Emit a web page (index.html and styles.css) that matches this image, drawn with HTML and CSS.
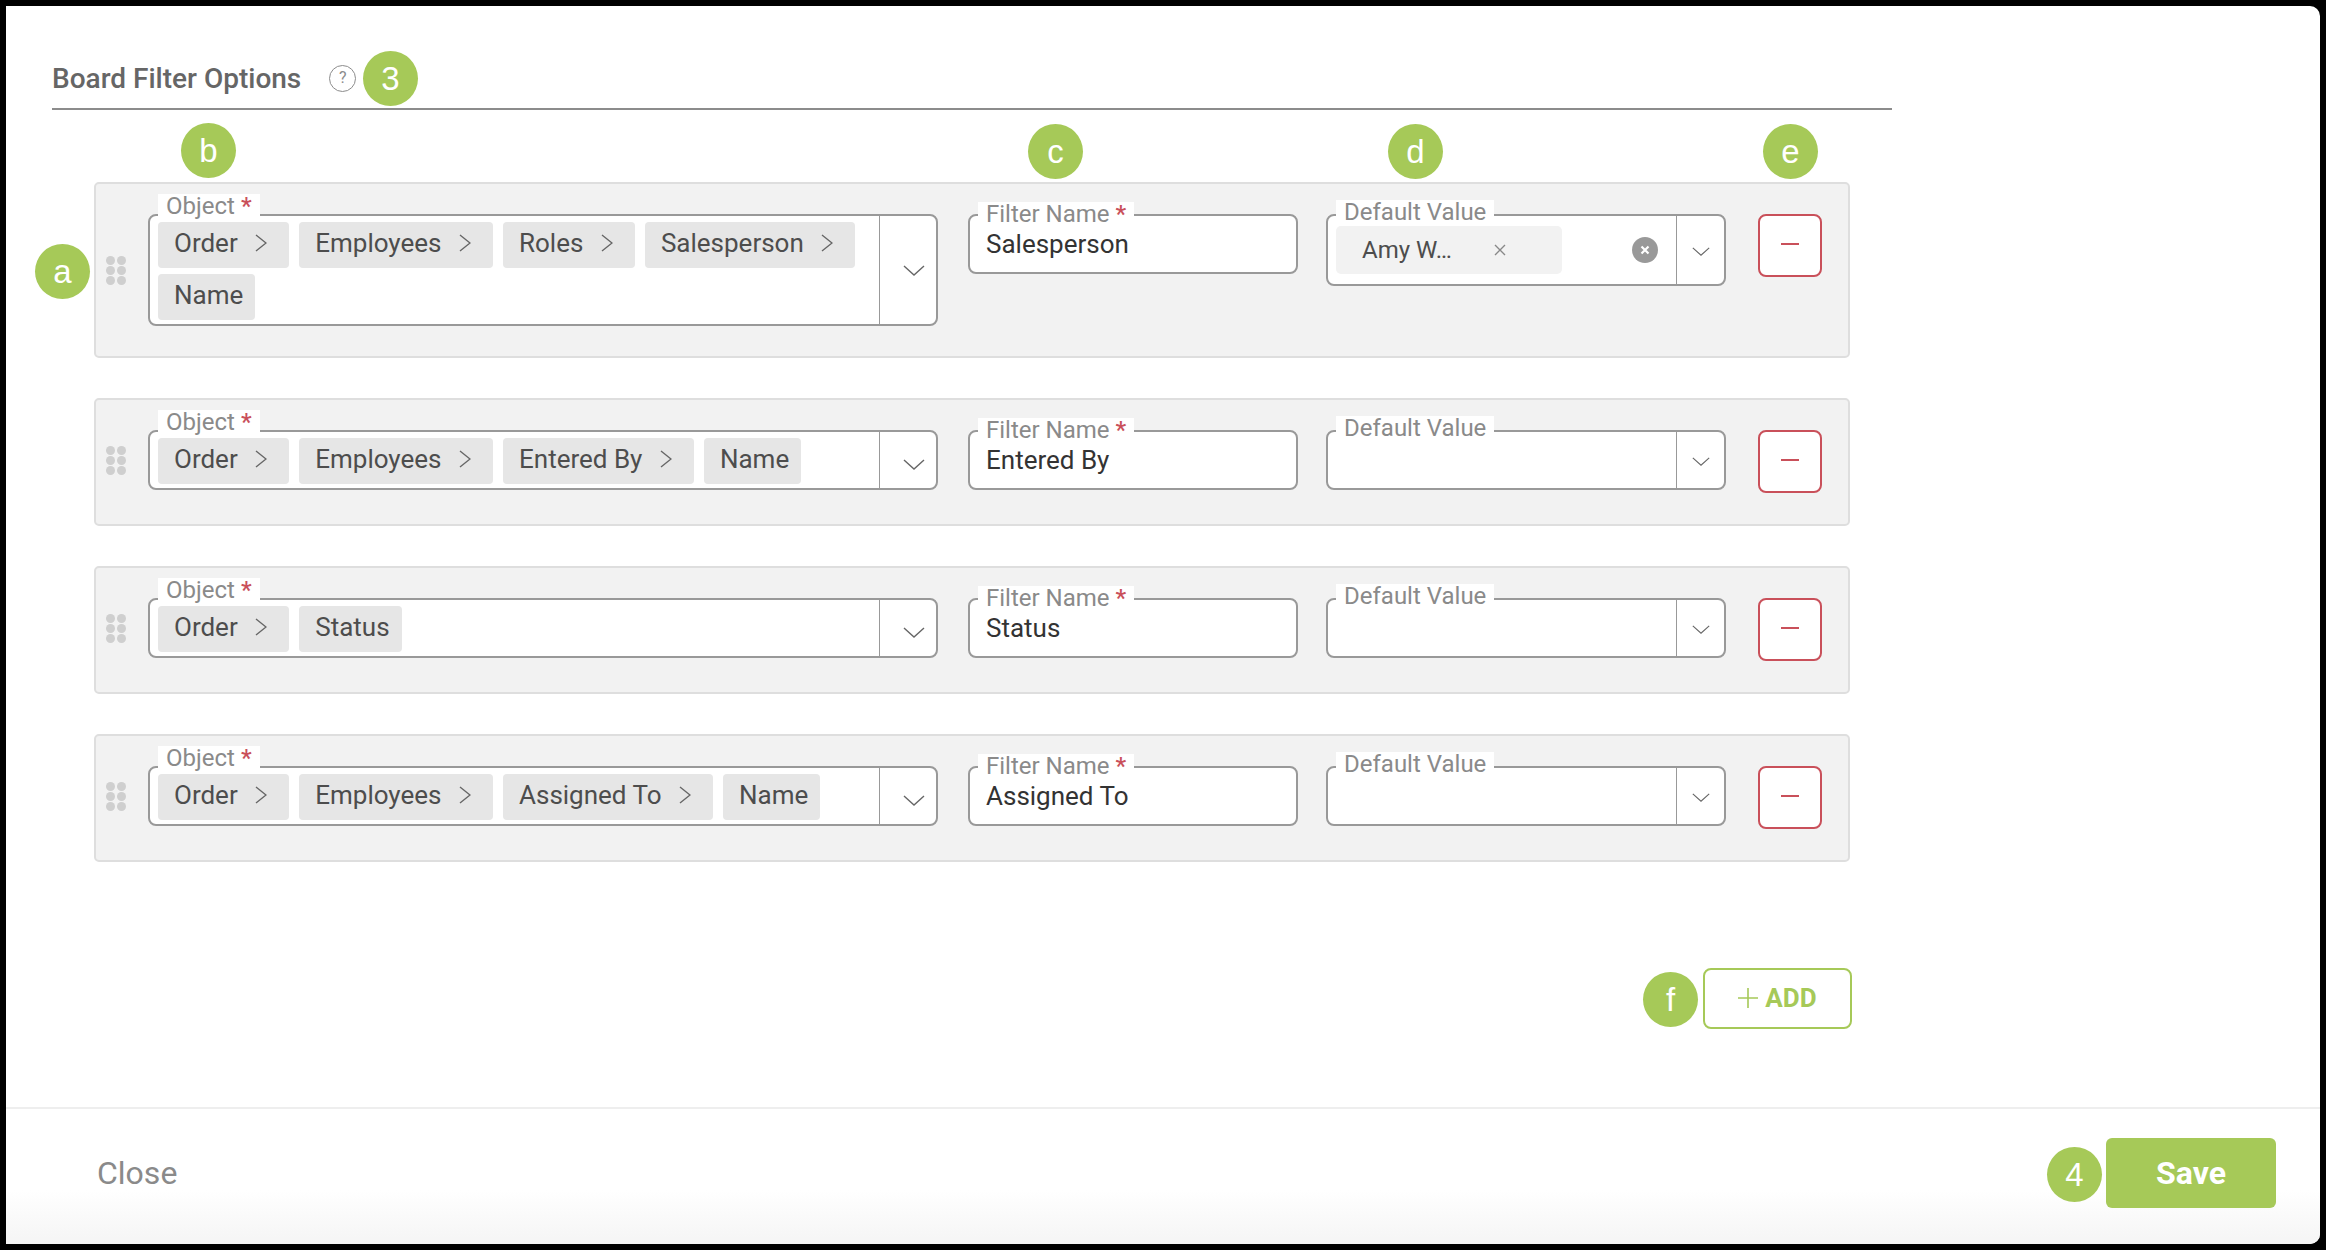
FILE: index.html
```html
<!DOCTYPE html>
<html lang="en">
<head>
<meta charset="utf-8">
<title>Board Filter Options</title>
<link rel="stylesheet" href="styles.css">
</head>
<body>
<svg class="defs" width="0" height="0" aria-hidden="true">
  <symbol id="crumb" viewBox="0 0 12 18"><path d="M1 1l10 8-10 8" fill="none" stroke="#666" stroke-width="1.4"/></symbol>
  <symbol id="caret" viewBox="0 0 22 11"><path d="M1 1l10 9 10-9" fill="none" stroke="#666" stroke-width="1.4"/></symbol>
</svg>
<div class="modal">
  <header class="head">
    <h1 class="title">Board Filter Options</h1>
    <span class="help">?</span>
  </header>

  <main class="rows">
    <section class="row row-tall">
      <div class="object-group">
        <div class="grip"><i></i><i></i><i></i><i></i><i></i><i></i></div>
        <div class="field object">
          <label class="label label-object">Object<b>*</b></label>
          <div class="chips">
            <span class="chip">Order<svg class="crumb"><use href="#crumb"/></svg></span>
            <span class="chip">Employees<svg class="crumb"><use href="#crumb"/></svg></span>
            <span class="chip">Roles<svg class="crumb"><use href="#crumb"/></svg></span>
            <span class="chip">Salesperson<svg class="crumb"><use href="#crumb"/></svg></span>
            <span class="chip">Name</span>
          </div>
          <div class="drop"><svg class="caret"><use href="#caret"/></svg></div>
        </div>
      </div>
      <div class="field name">
        <label class="label label-name">Filter Name<b>*</b></label>
        <span class="value">Salesperson</span>
      </div>
      <div class="field default default-filled">
        <label class="label label-default">Default Value</label>
        <div class="default-body">
          <span class="tag">Amy W…<svg class="tag-x" viewBox="0 0 12 12"><path d="M1 1l10 10M11 1L1 11" stroke="#888" stroke-width="1.4"/></svg></span>
          <svg class="clear" viewBox="0 0 26 26"><circle cx="13" cy="13" r="13" fill="#999"/><path d="M9.5 9.5l7 7M16.5 9.5l-7 7" stroke="#fff" stroke-width="2.2"/></svg>
        </div>
        <div class="drop drop-small"><svg class="caret-small"><use href="#caret"/></svg></div>
      </div>
      <button class="minus" type="button"><span></span></button>
    </section>

    <section class="row">
      <div class="object-group">
        <div class="grip"><i></i><i></i><i></i><i></i><i></i><i></i></div>
        <div class="field object">
          <label class="label label-object">Object<b>*</b></label>
          <div class="chips">
            <span class="chip">Order<svg class="crumb"><use href="#crumb"/></svg></span>
            <span class="chip">Employees<svg class="crumb"><use href="#crumb"/></svg></span>
            <span class="chip">Entered By<svg class="crumb"><use href="#crumb"/></svg></span>
            <span class="chip">Name</span>
          </div>
          <div class="drop"><svg class="caret"><use href="#caret"/></svg></div>
        </div>
      </div>
      <div class="field name">
        <label class="label label-name">Filter Name<b>*</b></label>
        <span class="value">Entered By</span>
      </div>
      <div class="field default">
        <label class="label label-default">Default Value</label>
        <div class="default-body"></div>
        <div class="drop drop-small"><svg class="caret-small"><use href="#caret"/></svg></div>
      </div>
      <button class="minus" type="button"><span></span></button>
    </section>

    <section class="row">
      <div class="object-group">
        <div class="grip"><i></i><i></i><i></i><i></i><i></i><i></i></div>
        <div class="field object">
          <label class="label label-object">Object<b>*</b></label>
          <div class="chips">
            <span class="chip">Order<svg class="crumb"><use href="#crumb"/></svg></span>
            <span class="chip">Status</span>
          </div>
          <div class="drop"><svg class="caret"><use href="#caret"/></svg></div>
        </div>
      </div>
      <div class="field name">
        <label class="label label-name">Filter Name<b>*</b></label>
        <span class="value">Status</span>
      </div>
      <div class="field default">
        <label class="label label-default">Default Value</label>
        <div class="default-body"></div>
        <div class="drop drop-small"><svg class="caret-small"><use href="#caret"/></svg></div>
      </div>
      <button class="minus" type="button"><span></span></button>
    </section>

    <section class="row">
      <div class="object-group">
        <div class="grip"><i></i><i></i><i></i><i></i><i></i><i></i></div>
        <div class="field object">
          <label class="label label-object">Object<b>*</b></label>
          <div class="chips">
            <span class="chip">Order<svg class="crumb"><use href="#crumb"/></svg></span>
            <span class="chip">Employees<svg class="crumb"><use href="#crumb"/></svg></span>
            <span class="chip">Assigned To<svg class="crumb"><use href="#crumb"/></svg></span>
            <span class="chip">Name</span>
          </div>
          <div class="drop"><svg class="caret"><use href="#caret"/></svg></div>
        </div>
      </div>
      <div class="field name">
        <label class="label label-name">Filter Name<b>*</b></label>
        <span class="value">Assigned To</span>
      </div>
      <div class="field default">
        <label class="label label-default">Default Value</label>
        <div class="default-body"></div>
        <div class="drop drop-small"><svg class="caret-small"><use href="#caret"/></svg></div>
      </div>
      <button class="minus" type="button"><span></span></button>
    </section>

    <div class="add-row">
      <button class="add" type="button"><svg class="plus" viewBox="0 0 20 20"><path d="M10 0v20M0 10h20" stroke="#a6c958" stroke-width="1.6"/></svg>ADD</button>
    </div>
  </main>

  <footer class="foot">
    <span class="close">Close</span>
    <button class="save" type="button">Save</button>
  </footer>

  <span class="badge badge-3">3</span>
  <span class="badge badge-a">a</span>
  <span class="badge badge-b">b</span>
  <span class="badge badge-c">c</span>
  <span class="badge badge-d">d</span>
  <span class="badge badge-e">e</span>
  <span class="badge badge-f">f</span>
  <span class="badge badge-4">4</span>
</div>
</body>
</html>
```

FILE: styles.css
```css
* { box-sizing: border-box; }
html, body { height: 100%; }
body {
  margin: 0;
  padding: 6px;
  background: #000;
  font-family: Roboto, "Liberation Sans", sans-serif;
  font-size: 26px;
  overflow: hidden;
}
.defs { position: absolute; }
.modal {
  position: relative;
  display: flex;
  flex-direction: column;
  height: 100%;
  background: #fff;
  border-radius: 0 10px 10px 0;
  overflow: hidden;
}
.head {
  display: flex;
  align-items: center;
  gap: 28px;
  width: 1840px;
  margin-left: 46px;
  padding: 52px 0 10px;
  border-bottom: 2px solid #8c8c8c;
}
.title {
  margin: 0;
  padding-top: 2px;
  font-size: 28px;
  line-height: 38px;
  font-weight: 500;
  color: #666;
}
.help {
  width: 27px;
  height: 27px;
  border: 1.5px solid #8c8c8c;
  border-radius: 50%;
  color: #8c8c8c;
  font-size: 16px;
  line-height: 24px;
  text-align: center;
}
.rows {
  width: 1758px;
  margin: 72px 0 0 88px;
  display: flex;
  flex-direction: column;
  gap: 40px;
}
.row {
  display: flex;
  align-items: flex-start;
  width: 1756px;
  padding: 30px 0 31px 10px;
  background: #f2f2f2;
  border: 2px solid #dedede;
  border-radius: 5px;
}
.row-tall { padding-bottom: 30px; }
.object-group {
  display: flex;
  align-items: center;
  gap: 22px;
}
.grip {
  display: grid;
  grid-template-columns: 9px 9px;
  grid-auto-rows: 9px;
  gap: 1px 2px;
  width: 20px;
}
.grip i {
  background: #cfcfcf;
  border-radius: 50%;
}
.field {
  position: relative;
  display: flex;
  background: #fff;
  border: 2px solid #999;
  border-radius: 8px;
  min-height: 60px;
}
.label {
  position: absolute;
  background: #fff;
  padding: 0 8px;
  font-size: 24px;
  color: #8a8a8a;
  white-space: nowrap;
}
.label b {
  margin-left: 6px;
  font-weight: 500;
  color: #c9505a;
}
.label-object { top: -22px; left: 8px; height: 23px; line-height: 25px; }
.label-name { top: -14px; left: 8px; height: 24px; line-height: 24px; }
.label-default { top: -16px; left: 8px; height: 24px; line-height: 24px; }
.object { width: 790px; }
.chips {
  flex: 1;
  display: flex;
  flex-wrap: wrap;
  align-content: flex-start;
  gap: 6px 10px;
  padding: 6px 8px 4px;
}
.chip {
  display: flex;
  align-items: center;
  height: 46px;
  padding: 0 12px 5px 16px;
  background: #e6e6e6;
  border-radius: 4px;
  color: #4d4d4d;
  white-space: nowrap;
}
.crumb {
  width: 12px;
  height: 18px;
  margin: 0 10px 0 17.5px;
}
.drop {
  width: 57px;
  display: flex;
  align-items: center;
  justify-content: center;
  border-left: 1.5px solid #999;
  padding: 8px 0 0 12px;
}
.row-tall .object .drop { padding-top: 1px; }
.caret { width: 22px; height: 11px; }
.name {
  width: 330px;
  margin-left: 30px;
  padding-left: 16px;
  align-items: center;
  color: #333;
}
.default {
  width: 400px;
  margin-left: 28px;
}
.default-body {
  flex: 1;
  display: flex;
  align-items: center;
  padding-left: 8px;
}
.default-filled { min-height: 72px; }
.tag {
  display: flex;
  align-items: center;
  width: 226px;
  height: 48px;
  padding-left: 26px;
  background: #f2f2f2;
  border-radius: 5px;
  color: #4d4d4d;
  font-size: 24px;
}
.tag-x { width: 12px; height: 12px; margin-left: 42px; }
.clear { width: 26px; height: 26px; margin: 0 0 0 70px; }
.drop-small { width: 48px; padding: 2px 0 0; }
.caret-small { width: 18px; height: 9px; }
.minus {
  display: flex;
  align-items: center;
  justify-content: center;
  width: 64px;
  height: 63px;
  margin-left: 32px;
  padding: 0 0 3px;
  background: #fff;
  border: 2px solid #c9505a;
  border-radius: 8px;
}
.minus span {
  width: 18px;
  height: 2.5px;
  background: #c9505a;
}
.add-row {
  display: flex;
  justify-content: flex-end;
  margin-top: 66px;
}
.add {
  display: flex;
  align-items: center;
  justify-content: center;
  gap: 7px;
  width: 149px;
  height: 61px;
  padding: 0 0 2px;
  background: #fff;
  border: 2px solid #a6c958;
  border-radius: 8px;
  color: #a6c958;
  font-family: Roboto, sans-serif;
  font-size: 26px;
  font-weight: 700;
}
.plus { width: 20px; height: 20px; }
.foot {
  display: flex;
  align-items: center;
  justify-content: space-between;
  margin-top: auto;
  height: 137px;
  padding: 0 44px 7px 91px;
  border-top: 2px solid #eee;
  background: linear-gradient(#fff 60%, #f5f5f5);
}
.close {
  font-size: 32px;
  color: #8a8a8a;
}
.save {
  width: 170px;
  height: 70px;
  background: #a6c958;
  border: 0;
  border-radius: 6px;
  color: #fff;
  font-family: Roboto, sans-serif;
  font-size: 32px;
  font-weight: 700;
}
.badge {
  position: absolute;
  width: 55px;
  height: 55px;
  border-radius: 50%;
  background: #a6c958;
  color: #fff;
  font-family: "Liberation Sans", Arial, sans-serif;
  font-size: 33px;
  line-height: 55px;
  text-align: center;
}
.badge-3 { left: 357px; top: 45px; }
.badge-a { left: 29px; top: 238px; }
.badge-b { left: 175px; top: 117px; }
.badge-c { left: 1022px; top: 118px; }
.badge-d { left: 1382px; top: 118px; }
.badge-e { left: 1757px; top: 118px; }
.badge-f { left: 1637px; top: 966px; }
.badge-4 { left: 2041px; top: 1141px; }
```
